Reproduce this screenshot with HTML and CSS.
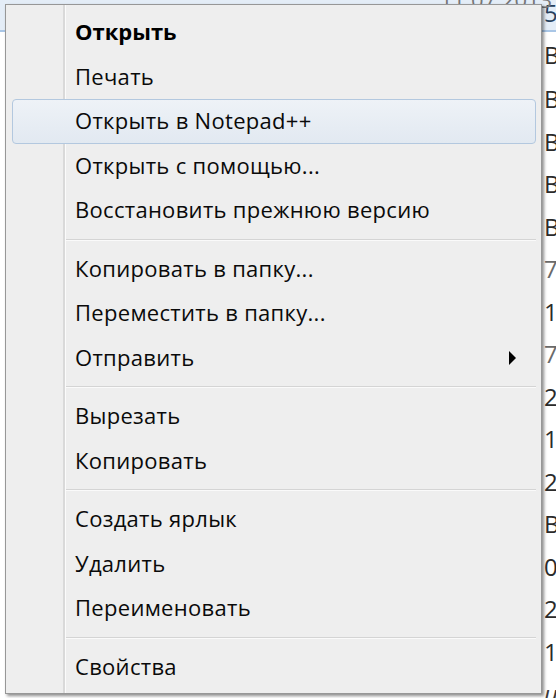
FILE: index.html
```html
<!DOCTYPE html>
<html lang="ru">
<head>
<meta charset="utf-8">
<title>Контекстное меню</title>
<link rel="stylesheet" href="styles.css">
</head>
<body>
<div class="desktop">
  <div class="toptext">11.07.2013</div>
  <div class="filelist">
    <div class="row row-selected"><span class="cell cell-blue">5</span></div>
    <div class="row"><span class="cell">B</span></div>
    <div class="row"><span class="cell">B</span></div>
    <div class="row"><span class="cell">B</span></div>
    <div class="row"><span class="cell">B</span></div>
    <div class="row"><span class="cell">B</span></div>
    <div class="row"><span class="cell cell-light">7</span></div>
    <div class="row"><span class="cell">1</span></div>
    <div class="row"><span class="cell cell-light">7</span></div>
    <div class="row"><span class="cell">2</span></div>
    <div class="row"><span class="cell">1</span></div>
    <div class="row"><span class="cell">2</span></div>
    <div class="row"><span class="cell">B</span></div>
    <div class="row"><span class="cell">0</span></div>
    <div class="row"><span class="cell">2</span></div>
    <div class="row"><span class="cell">1</span></div>
    <div class="row"><span class="cell cell-italic">и</span></div>
  </div>

  <div class="menu">
    <ul class="items">
      <li class="item item-bold">Открыть</li>
      <li class="item">Печать</li>
      <li class="item item-hover">Открыть в Notepad++</li>
      <li class="item">Открыть с помощью...</li>
      <li class="item">Восстановить прежнюю версию</li>
      <li class="sep"></li>
      <li class="item">Копировать в папку...</li>
      <li class="item">Переместить в папку...</li>
      <li class="item item-sub">Отправить<span class="arrow"></span></li>
      <li class="sep"></li>
      <li class="item">Вырезать</li>
      <li class="item">Копировать</li>
      <li class="sep"></li>
      <li class="item">Создать ярлык</li>
      <li class="item">Удалить</li>
      <li class="item">Переименовать</li>
      <li class="sep"></li>
      <li class="item">Свойства</li>
    </ul>
  </div>
</div>
</body>
</html>
```
FILE: styles.css
```css
html, body {
  margin: 0;
  padding: 0;
}
body {
  width: 556px;
  height: 698px;
  overflow: hidden;
  background: #ffffff;
  font-family: "Open Sans", "Noto Sans", "DejaVu Sans", sans-serif;
}
.desktop {
  position: relative;
  width: 556px;
  height: 698px;
  overflow: hidden;
  background: #ffffff;
}
.toptext {
  position: absolute;
  top: -16px;
  left: 440px;
  font-size: 22px;
  color: #777;
}
.filelist {
  display: flex;
  flex-direction: column;
}
.row {
  height: 42.5px;
  display: flex;
  align-items: center;
  padding-left: 544px;
  box-sizing: border-box;
}
.row-selected {
  height: 32px;
  background: #e4edf7;
  border-bottom: 2px solid #a9c6e6;
  align-items: flex-start;
}
.row-selected + .row {
  height: 46px;
}
.cell {
  font-size: 24px;
  line-height: 28px;
  color: #2b2b2b;
}
.cell-blue {
  color: #27415e;
  line-height: 26px;
}
.cell-light {
  color: #6a6a6a;
}
.cell-italic {
  font-style: italic;
  color: #3a3a3a;
}

.menu {
  position: absolute;
  left: 5px;
  top: 4px;
  width: 537px;
  height: 690px;
  box-sizing: border-box;
  border: 1px solid #979797;
  background:
    linear-gradient(to right,
      transparent 57px,
      #d9d9d9 57px, #d9d9d9 59px,
      #fbfbfb 59px, #fbfbfb 60px,
      transparent 60px),
    #eeeeee;
  box-shadow: 2px 2px 3px rgba(0, 0, 0, 0.45);
  padding: 5px 5px 3px 6px;
}
.items {
  list-style: none;
  margin: 0;
  padding: 0;
}
.item {
  position: relative;
  height: 44.5px;
  line-height: 40px;
  padding-left: 62px;
  box-sizing: border-box;
  font-size: 22px;
  letter-spacing: 0.3px;
  color: #0a0a0a;
  border: 1px solid transparent;
  border-radius: 4px;
  white-space: nowrap;
}
.item-bold {
  font-weight: 700;
  letter-spacing: 0;
  color: #000;
}
.item-hover {
  border-color: #b3c8df;
  background: linear-gradient(to bottom, #eef2f7, #e2e9f1);
}
.sep {
  height: 14px;
  margin-left: 54px;
  position: relative;
}
.sep::after {
  content: "";
  position: absolute;
  left: 0;
  right: 0;
  top: 6px;
  height: 1px;
  background: #d4d4d4;
  border-bottom: 1px solid #fafafa;
}
.arrow {
  position: absolute;
  right: 19px;
  top: 14px;
  width: 0;
  height: 0;
  border-top: 7px solid transparent;
  border-bottom: 7px solid transparent;
  border-left: 7px solid #000;
}
```
